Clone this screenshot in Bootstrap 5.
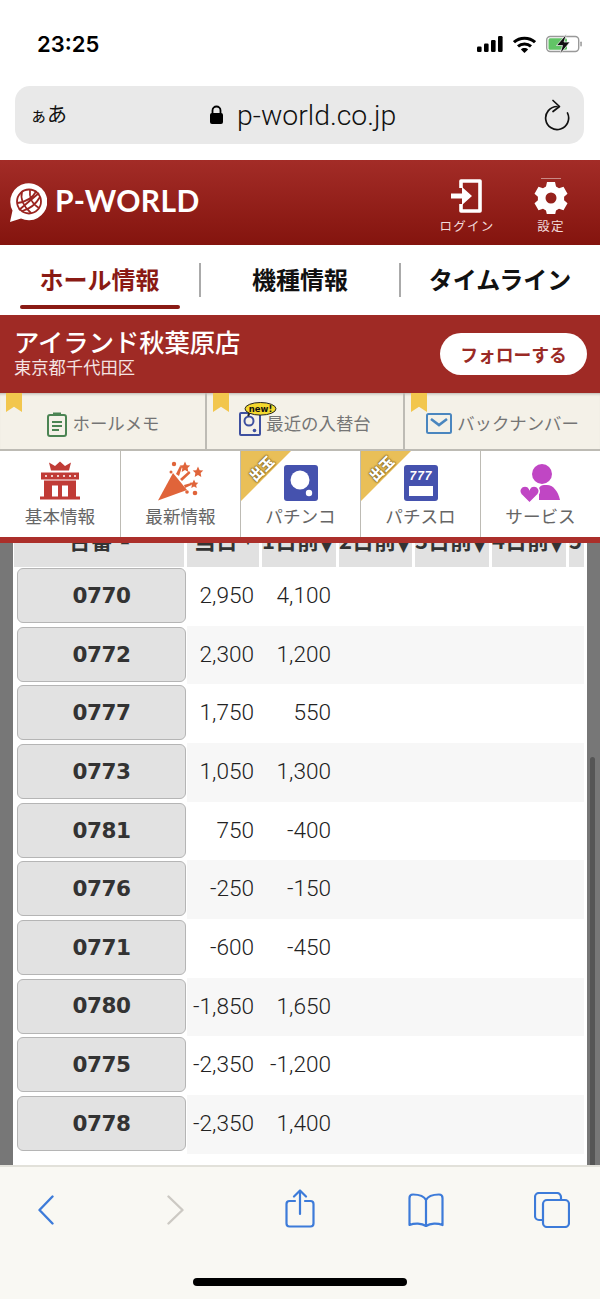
<!DOCTYPE html>
<html lang="ja">
<head>
  <meta charset="UTF-8">
  <meta name="viewport" content="width=device-width, initial-scale=1.0">
  <title>P-WORLD</title>
  <link href="https://cdn.jsdelivr.net/npm/bootstrap@5.3.0/dist/css/bootstrap.min.css" rel="stylesheet">
  <style>
    html, body { height: 100%; }
    body {
      width: 600px; height: 1299px; overflow: hidden; background: #fff; color: #333;
      font-family: "Liberation Sans", "Noto Sans CJK JP", sans-serif;
    }
    .jp { font-family: "Noto Sans CJK JP", sans-serif; }

    /* iOS chrome */
    .status-bar { height: 86px; padding: 30px 18px 0 37px; }
    .clock { font-family: Inter, sans-serif; font-weight: 600; font-size: 22px; line-height: 28px; color: #000; }
    .st-icons { gap: 10px; margin-top: 4px; }
    .url-wrap { padding: 0 16px 16px 15px; }
    .url-bar { height: 58px; background: #e9e9e9; border-radius: 15px; padding: 0 14px 0 15px; color: #111; }
    .url-aa { font-size: 20px; width: 179px; margin-top: -2px; }
    .url-aa small { font-size: 17px; }
    .url-host { font-family: Roboto, sans-serif; font-size: 28.4px; font-weight: 300; color: #111; margin-left: 13px; margin-top: 2px; }

    /* site header */
    .site-head { height: 85px; background: linear-gradient(#a32c27, #84140e); padding: 0 21px 0 10px; color: #fff; }
    .logo-word { font-family: Lato, sans-serif; font-weight: 700; font-size: 30px; letter-spacing: .4px; margin: 0 0 5px 8px; line-height: 1; }
    .head-icons { margin-top: 6px; }
    .head-btn { width: 56px; color: #f2dcdc; font-size: 12.5px; line-height: 16px; letter-spacing: 1.3px; white-space: nowrap; }
    .head-btn svg { margin-bottom: 4px; }
    .head-btn + .head-btn { margin-left: 28px; }

    /* tabs */
    .main-tabs { height: 70px; background: #fff; position: relative; }
    .main-tab { width: 200px; height: 34px; font-weight: 700; font-size: 24px; line-height: 32px; color: #111; text-align: center; margin-top: 18px; }
    .main-tab + .main-tab { border-left: 2px solid #aaa; }
    .main-tab:first-child { width: 199px; }
    .main-tab:last-child { font-size: 23px; padding-right: 3px; }
    .main-tab.on { color: #8a1a14; }
    .tab-bar { position: absolute; left: 20px; top: 60px; width: 160px; height: 4px; border-radius: 2px; background: #8a1a14; }

    /* store bar */
    .store-bar { height: 78px; background: #9f2a25; color: #fff; padding: 0 13px 0 14px; }
    .store-txt { margin-top: -5px; }
    .store-name { font-size: 25.3px; font-weight: 500; line-height: 30px; }
    .store-area { font-size: 17.3px; line-height: 21px; color: #f4e3e2; }
    .follow-btn { width: 147px; height: 42px; border-radius: 21px; background: #fff; color: #9a2a25; font-weight: 700; font-size: 17.8px; padding: 0; border: 0; }

    /* memo row */
    .memo-row { height: 58px; background: #f4f1e8; border-bottom: 2px solid #bdbbb4; box-shadow: inset 0 3px 3px -2px rgba(0,0,0,.25); }
    .memo-cell { position: relative; height: 100%; color: #757575; font-size: 17.4px; padding-top: 5px; gap: 5px; }
    .memo-cell + .memo-cell { border-left: 2px solid #bdbbb4; }
    .memo-1 { width: 205px; }
    .memo-2 { width: 198px; }
    .ribbon { position: absolute; top: 0; left: 6px; width: 16px; height: 19px; background: #f2c64d; clip-path: polygon(0 0, 100% 0, 100% 100%, 50% 72%, 0 100%); }
    .new-tag { position: absolute; left: 37px; top: 9px; width: 33px; height: 15px; }

    /* category row */
    .cat-row { height: 92px; background: #fff; border-bottom: 6px solid #ab2f2a; position: relative; z-index: 2; }
    .cat-cell { position: relative; width: 120px; color: #666; font-size: 17.6px; line-height: 22px; padding-top: 10px; text-align: center; overflow: hidden; }
    .cat-cell + .cat-cell { border-left: 1.5px solid #bdbbb4; }
    .cat-ico { height: 44px; display: flex; justify-content: center; align-items: flex-start; }
    .corner { position: absolute; left: 0; top: 0; width: 50px; height: 50px; background: #e9bf58; clip-path: polygon(0 0, 100% 0, 0 100%); }
    .corner-txt { position: absolute; left: 2px; top: 9px; width: 36px; text-align: center; transform: rotate(-45deg); font-size: 14px; line-height: 16px; font-weight: 900; color: #fff; text-shadow: 0 0 2px #7c5d14, 0 0 2px #7c5d14, 0 0 1px #7c5d14; }
    .ico-low { margin-top: 4px; }

    /* data table */
    .gray-side { flex: 1 1 auto; background: #777; padding: 0 13px; position: relative; min-height: 0; overflow: hidden; }
    .white-panel { background: #fff; height: 100%; padding-left: 1px; }
    .hall-table { table-layout: fixed; width: 570px; border-collapse: separate; border-spacing: 0; margin: 0; --bs-table-bg: transparent; }
    .hall-table th { height: 24px; padding: 0; background: #e1e1e1; border: 0; border-right: 3px solid #fff; overflow: hidden; }
    .hall-table th:last-child { border-right: 0; }
    .th-in { display: block; height: 24px; overflow: hidden; white-space: nowrap; font-size: 22px; font-weight: 700; line-height: 24px; color: #333; }
    .th-in span { position: relative; top: -16px; }
    .th-in b { font-family: "DejaVu Sans", sans-serif; font-size: 17px; font-weight: 400; position: relative; top: 2px; margin-left: 1px; }
    .th-first b { margin-left: 8px; top: -6px; font-size: 11px; }
    .th-day b { margin-left: 6px; top: -5px; font-size: 11px; }
    .hall-table td { height: 58.67px; padding: 0 8px 0 0; border: 0; text-align: right; font-family: Roboto, sans-serif; font-weight: 300; font-size: 22.6px; line-height: 1; vertical-align: middle; color: #222; }
    .hall-table tbody tr:nth-child(even) td { background: #f7f7f7; }
    .hall-table tbody tr:nth-child(even) td:first-child { background: #fff; }
    .hall-table td:first-child { padding: 1px 0 0 3px; text-align: left; vertical-align: top; }
    .num-btn { display: block; width: 169px; height: 55px; padding: 1px 0 0; background: #e2e2e2; border: 1.5px solid #b5b5b5; border-radius: 6px; font-family: "DejaVu Sans", sans-serif; font-weight: 700; font-size: 21.5px; letter-spacing: -.4px; color: #333; }
    .side-thumb { position: absolute; right: 5px; top: 214px; width: 5.5px; height: 420px; border-radius: 3px; background: #555; }

    /* bottom toolbar */
    .tool-bar { height: 134px; flex: 0 0 134px; background: #f9f8f3; border-top: 2px solid #e2e1da; padding-left: 38px; position: relative; }
    .t-back { margin-top: 28px; }
    .t-next { margin: 28px 0 0 113px; }
    .t-share { margin: 22px 0 0 101px; }
    .t-book { margin: 26px 0 0 93px; }
    .t-tabs { margin: 25px 0 0 90px; }
    .home-line { position: absolute; left: 193px; top: 111px; width: 214px; height: 8px; border-radius: 4px; background: #000; }
  </style>
</head>
<body class="d-flex flex-column">

  <!-- status bar -->
  <div class="status-bar d-flex justify-content-between align-items-start flex-shrink-0">
    <div class="clock">23:25</div>
    <div class="st-icons d-flex align-items-center">
      <svg width="26" height="16" viewBox="0 0 26 16"><g fill="#000"><rect x="0" y="10.500" width="4.600" height="5.500" rx="1.200"/><rect x="7" y="7.500" width="4.600" height="8.500" rx="1.200"/><rect x="14" y="4" width="4.600" height="12" rx="1.200"/><rect x="21" y="0" width="4.600" height="16" rx="1.200"/></g></svg>
      <svg width="23" height="17" viewBox="0 0 23 17" fill="none" stroke="#000" stroke-width="3"><path d="M1 6.200C6.800.8 16.200.8 22 6.200"/><path d="M5 10.400c3.600-3.300 9.400-3.300 13 0"/><path d="M11.500 17L7.900 13.400c2-1.800 5.200-1.800 7.200 0z" fill="#000" stroke="none"/></svg>
      <svg width="36" height="20" viewBox="0 0 36 20"><rect x=".7" y="2.500" width="32" height="15" rx="3.500" fill="#fff" stroke="#999" stroke-width="1.400"/><rect x="2.500" y="4.300" width="18.500" height="11.400" rx="1.500" fill="#62c466"/><rect x="34.300" y="7.500" width="1.500" height="5" rx=".7" fill="#999"/><path d="M20.500 0L10.500 11.500h6L14 20l10-12h-6z" fill="#111" stroke="#fff" stroke-width=".7"/></svg>
    </div>
  </div>

  <!-- address bar -->
  <div class="url-wrap flex-shrink-0">
    <div class="url-bar d-flex align-items-center">
      <div class="url-aa jp"><small>ぁ</small>あ</div>
      <svg width="15" height="20" viewBox="0 0 15 20"><path d="M3.500 9V5.500a4 4 0 0 1 8 0V9" fill="none" stroke="#000" stroke-width="1.800"/><rect x="1" y="8" width="13" height="11" rx="2" fill="#000"/></svg>
      <div class="url-host">p-world.co.jp</div>
      <svg class="ms-auto" width="26" height="32" viewBox="0 0 26 32" fill="none" stroke="#111" stroke-width="1.700" stroke-linecap="round" stroke-linejoin="round"><path d="M13 7.500A11.500 11.500 0 1 0 23.500 14"/><path d="M9 1.500l6.500 6L9 12.500"/></svg>
    </div>
  </div>

  <!-- site header -->
  <div class="site-head d-flex align-items-center justify-content-between flex-shrink-0">
    <div class="d-flex align-items-center">
      <svg width="37" height="39" viewBox="0 0 37 39">
        <path d="M0 39l2.500-11.500A18.500 18.500 0 1 1 11 35.500z" fill="#fff"/>
        <g fill="none" stroke="#9b2420" stroke-width="1.800"><circle cx="19" cy="18.500" r="12"/><path d="M9 27L29 10M7.500 20c8-1 15-5 19-12M12 28c8-2 14-7 18-14M12 9c-2 7 2 15 9 21M20 7c-1 7 2 14 9 18"/></g>
      </svg>
      <div class="logo-word">P-WORLD</div>
    </div>
    <div class="head-icons d-flex align-items-end jp">
      <div class="head-btn d-flex flex-column align-items-center">
        <svg width="34" height="36" viewBox="0 0 34 36" fill="none" stroke="#fff"><path d="M11 10V3h19v30H11v-7" stroke-width="3.600" stroke-linejoin="round"/><path d="M1 15.500h11V9l10 9-10 9v-6.500H1z" fill="#fff" stroke="none"/></svg>
        <div>ログイン</div>
      </div>
      <div class="head-btn d-flex flex-column align-items-center">
        <svg width="34" height="36" viewBox="0 0 34 36"><path d="M7 .5h20" stroke="#c98a86" stroke-width="1"/><path fill="#fff" fill-rule="evenodd" d="M13 4h8l1 4.500 3 1.700 4.500-1.400 4 6.900-3.400 3.100v3.400l3.400 3.100-4 6.900-4.500-1.400-3 1.700-1 4.500h-8l-1-4.500-3-1.700-4.500 1.400-4-6.900 3.400-3.100v-3.400L.5 15.700l4-6.900L9 10.200l3-1.700zM17 14.500a5.500 5.500 0 1 0 0 11 5.500 5.500 0 0 0 0-11z"/></svg>
        <div>設定</div>
      </div>
    </div>
  </div>

  <!-- main tabs -->
  <div class="main-tabs d-flex flex-shrink-0 jp">
    <div class="main-tab on">ホール情報</div>
    <div class="main-tab">機種情報</div>
    <div class="main-tab">タイムライン</div>
    <div class="tab-bar"></div>
  </div>

  <!-- store -->
  <div class="store-bar d-flex align-items-center justify-content-between flex-shrink-0 jp">
    <div class="store-txt">
      <div class="store-name">アイランド秋葉原店</div>
      <div class="store-area">東京都千代田区</div>
    </div>
    <button class="btn follow-btn jp">フォローする</button>
  </div>

  <!-- memo row -->
  <div class="memo-row d-flex flex-shrink-0 jp">
    <div class="memo-cell memo-1 d-flex align-items-center justify-content-center">
      <span class="ribbon"></span>
      <svg width="22" height="26" viewBox="0 0 22 26" fill="none" stroke="#4b8453" stroke-width="2"><rect x="2" y="4" width="18" height="21" rx="2"/><path d="M8 4V2.500h6V4" fill="#4b8453"/><path d="M6 11h10M6 15h10M6 19h7"/></svg>
      <span>ホールメモ</span>
    </div>
    <div class="memo-cell memo-2 d-flex align-items-center justify-content-center">
      <span class="ribbon"></span>
      <svg width="22" height="24" viewBox="0 0 22 24" fill="none" stroke="#3e50a0" stroke-width="2"><rect x="1" y="1" width="20" height="22" rx="1"/><circle cx="10" cy="9" r="4.500"/><circle cx="15.500" cy="18.500" r="1.800" fill="#3e50a0" stroke="none"/></svg>
      <span>最近の入替台</span>
      <svg class="new-tag" viewBox="0 0 33 15"><path d="M4 14l2-4" stroke="#222" stroke-width="2"/><ellipse cx="16.500" cy="6.800" rx="15.500" ry="6.300" fill="#f4d92e" stroke="#222" stroke-width="1"/><text x="16.500" y="10" text-anchor="middle" font-family="DejaVu Sans, sans-serif" font-size="8.500" font-weight="700" fill="#111">new!</text></svg>
    </div>
    <div class="memo-cell d-flex align-items-center justify-content-center flex-fill">
      <span class="ribbon"></span>
      <svg width="26" height="21" viewBox="0 0 26 21" fill="none" stroke="#4a86bf" stroke-width="2"><rect x="1" y="1" width="24" height="19" rx="1.500"/><path d="M5 6l8 6 8-6" stroke-width="2.600"/></svg>
      <span>バックナンバー</span>
    </div>
  </div>

  <!-- category row -->
  <div class="cat-row d-flex flex-shrink-0 jp">
    <div class="cat-cell">
      <div class="cat-ico"><svg width="40" height="39" viewBox="0 0 40 38"><g fill="#c03b36"><path d="M11 9L9 1l6 3.500L20 0l5 4.500L31 1l-2 8z"/><path d="M1 11h38v7H1z"/><path d="M4 19h32v16H4zM0 35h40v3H0z"/></g><g fill="#fff"><rect x="12" y="24" width="6" height="11"/><rect x="22" y="24" width="6" height="11"/><circle cx="6" cy="14.500" r="1"/><circle cx="12" cy="14.500" r="1"/><circle cx="18" cy="14.500" r="1"/><circle cx="24" cy="14.500" r="1"/><circle cx="30" cy="14.500" r="1"/><circle cx="35" cy="14.500" r="1"/></g></svg></div>
      基本情報
    </div>
    <div class="cat-cell">
      <div class="cat-ico"><svg width="46" height="40" viewBox="0 0 46 40">
        <defs><path id="star" d="M0-5l1.500 3.300 3.300.4-2.400 2.300.6 3.500-3-1.700-3 1.700.6-3.500-2.400-2.300 3.300-.4z"/></defs>
        <g fill="#e0643a">
          <path d="M0 39.500L15 12l14 17z"/>
          <path d="M18 13l4-8 2 1-3 9zM22 18l9-8 1.500 2-8.500 8zM26 24l7-2 .5 2-6.500 3z"/>
          <use href="#star" transform="translate(27 6) scale(1.100)"/>
          <use href="#star" transform="translate(40 11) scale(1.100)"/>
          <use href="#star" transform="translate(36 23) scale(.9)"/>
          <circle cx="16" cy="3" r="2.200"/><circle cx="29" cy="31" r="1.800"/><circle cx="37" cy="32" r="2.300"/><circle cx="13" cy="11" r="1.500"/>
        </g></svg></div>
      最新情報
    </div>
    <div class="cat-cell">
      <span class="corner"></span><span class="corner-txt">出玉</span>
      <div class="cat-ico"><svg class="ico-low" width="34" height="36" viewBox="0 0 34 36"><rect width="34" height="36" rx="3" fill="#4552ae"/><circle cx="16" cy="15" r="9.500" fill="#fff"/><circle cx="25" cy="28" r="3.200" fill="#fff"/></svg></div>
      パチンコ
    </div>
    <div class="cat-cell">
      <span class="corner"></span><span class="corner-txt">出玉</span>
      <div class="cat-ico"><svg class="ico-low" width="34" height="36" viewBox="0 0 34 36"><rect width="34" height="36" rx="3" fill="#4552ae"/><rect x="5" y="21" width="24" height="10" fill="#fff"/><text x="17" y="15" text-anchor="middle" font-family="Liberation Sans, sans-serif" font-size="12" font-weight="700" font-style="italic" letter-spacing="1" fill="#fff">777</text></svg></div>
      パチスロ
    </div>
    <div class="cat-cell flex-fill">
      <div class="cat-ico"><svg width="42" height="42" viewBox="0 0 42 42"><g fill="#c046c4"><circle cx="22" cy="13" r="10"/><path d="M19 39V27c1-2 3-3 5-3h3c6 0 11 6 13 15z"/><path d="M9.500 42L1 33.500c-3-4 0-8.500 4-8.500 2.300 0 3.700 1 4.500 2.800.8-1.800 2.200-2.800 4.500-2.800 4 0 7 4.500 4 8.500z" stroke="#fff" stroke-width="1.500"/></g></svg></div>
      サービス
    </div>
  </div>

  <!-- table -->
  <div class="gray-side">
    <div class="white-panel">
      <table class="table hall-table">
        <colgroup><col style="width:173px"><col style="width:75px"><col style="width:77px"><col style="width:76px"><col style="width:77px"><col style="width:77px"><col style="width:15px"></colgroup>
        <thead>
          <tr id="headRow"></tr>
        </thead>
        <tbody id="rows"></tbody>
      </table>
    </div>
    <div class="side-thumb"></div>
  </div>

  <!-- bottom toolbar -->
  <div class="tool-bar d-flex align-items-start">
    <svg class="t-back" width="16" height="30" viewBox="0 0 16 30" fill="none" stroke="#3d7bd9" stroke-width="2.400" stroke-linecap="round" stroke-linejoin="round"><path d="M14.500 1.500L1.500 15l13 13.500"/></svg>
    <svg class="t-next" width="17" height="30" viewBox="0 0 17 30" fill="none" stroke="#ccc9c3" stroke-width="2.400" stroke-linecap="round" stroke-linejoin="round"><path d="M1.500 1.500l14 13.500-14 13.500"/></svg>
    <svg class="t-share" width="30" height="39" viewBox="0 0 30 39" fill="none" stroke="#3d7bd9" stroke-width="2.200" stroke-linecap="round" stroke-linejoin="round"><path d="M10 12H4.500a3 3 0 0 0-3 3v19.500a3 3 0 0 0 3 3h21a3 3 0 0 0 3-3V15a3 3 0 0 0-3-3H20"/><path d="M15 25V1.500M9 7.500l6-6 6 6"/></svg>
    <svg class="t-book" width="36" height="34" viewBox="0 0 36 34" fill="none" stroke="#3d7bd9" stroke-width="2.200" stroke-linecap="round" stroke-linejoin="round"><path d="M18 7C16 3 11 1.500 5 1.500 2.500 1.500 1.500 2.500 1.500 5v27c5-2 12-2 16.500 1 4.500-3 11.500-3 16.500-1V5c0-2.500-1-3.500-3.500-3.500C25 1.500 20 3 18 7zM18 7v26"/></svg>
    <svg class="t-tabs" width="36" height="36" viewBox="0 0 36 36" fill="none" stroke="#3d7bd9" stroke-width="2.200"><path d="M27 8V5a4 4 0 0 0-4-4H5a4 4 0 0 0-4 4v19a4 4 0 0 0 4 4h3"/><rect x="9" y="8" width="26" height="27" rx="4"/></svg>
    <div class="home-line"></div>
  </div>

  <script src="https://cdn.jsdelivr.net/npm/bootstrap@5.3.0/dist/js/bootstrap.bundle.min.js"></script>
  <script>
    const heads = [['台番', '▲', 'th-first'], ['当日', '▼', 'th-day'], ['1日前', '▼', ''], ['2日前', '▼', ''], ['3日前', '▼', ''], ['4日前', '▼', ''], ['5', '', '']];
    const data = [
      ['0770', '2,950', '4,100'], ['0772', '2,300', '1,200'], ['0777', '1,750', '550'],
      ['0773', '1,050', '1,300'], ['0781', '750', '-400'], ['0776', '-250', '-150'],
      ['0771', '-600', '-450'], ['0780', '-1,850', '1,650'], ['0775', '-2,350', '-1,200'],
      ['0778', '-2,350', '1,400']
    ];
    document.getElementById('headRow').innerHTML = heads.map(h =>
      `<th class="${h[2] ? 'text-center' : 'text-start'}"><div class="th-in jp ${h[2]}"><span>${h[0]}<b>${h[1]}</b></span></div></th>`).join('');
    document.getElementById('rows').innerHTML = data.map(r =>
      `<tr><td><button class="btn num-btn">${r[0]}</button></td><td>${r[1]}</td><td>${r[2]}</td><td></td><td></td><td></td><td></td></tr>`).join('');
  </script>
</body>
</html>
